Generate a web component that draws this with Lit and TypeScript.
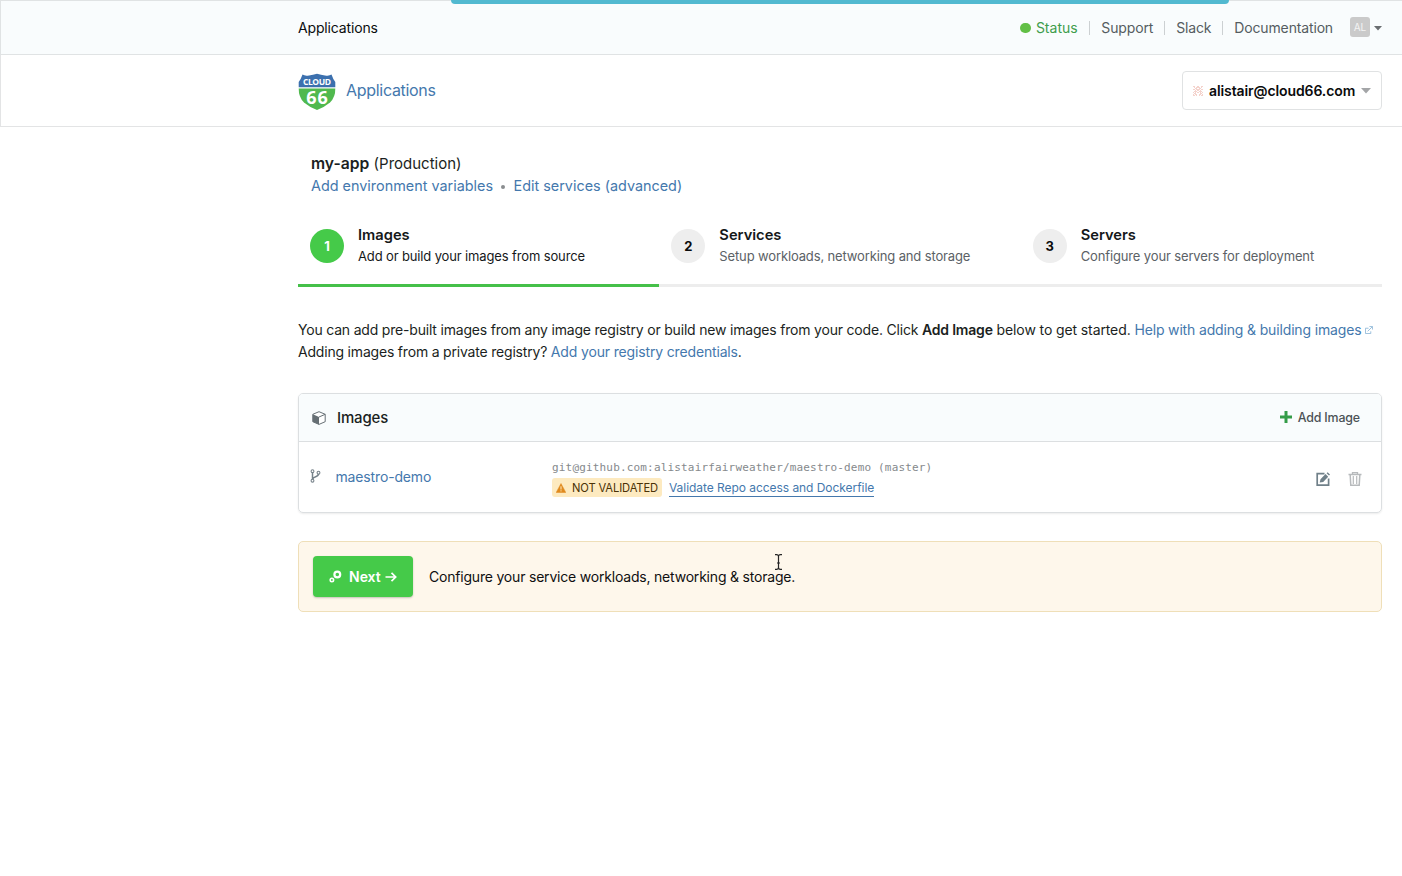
import { LitElement, html, css, svg } from "lit";
import { customElement } from "lit/decorators.js";
import { classMap } from "lit/directives/class-map.js";

interface Step {
  n: number;
  title: string;
  text: string;
  active?: boolean;
}

const STEPS: Step[] = [
  { n: 1, title: "Images", text: "Add or build your images from source", active: true },
  { n: 2, title: "Services", text: "Setup workloads, networking and storage" },
  { n: 3, title: "Servers", text: "Configure your servers for deployment" },
];

const identicon = [
  [0, 0], [1, 0], [4, 0], [5, 0], [8, 0], [9, 0], [1, 1], [3, 1], [4, 1], [5, 1], [6, 1], [8, 1], [2, 2], [3, 2], [6, 2], [7, 2],
  [0, 3], [1, 3], [3, 3], [4, 3], [5, 3], [6, 3], [8, 3], [9, 3], [2, 4], [4, 4], [5, 4], [7, 4], [1, 5], [2, 5], [3, 5], [6, 5], [7, 5], [8, 5],
  [0, 6], [2, 6], [4, 6], [5, 6], [7, 6], [9, 6], [1, 7], [2, 7], [7, 7], [8, 7], [0, 8], [2, 8], [3, 8], [6, 8], [7, 8], [9, 8], [0, 9], [1, 9], [3, 9], [6, 9], [8, 9], [9, 9],
];

@customElement("app-root")
export class AppRoot extends LitElement {
  static styles = css`
    :host {
      display: block;
      position: relative;
      height: 876px;
      overflow: hidden;
      background: #fff;
      color: #1b1f22;
      font-family: Inter, "Noto Sans", sans-serif;
      font-size: 14px;
      line-height: 22px;
      letter-spacing: -0.15px;
    }
    * { box-sizing: border-box; }
    svg { display: block; flex: none; letter-spacing: 0; }
    a { color: #4478ad; text-decoration: none; white-space: nowrap; }
    .loader {
      position: absolute;
      top: 0;
      left: 451px;
      width: 778px;
      height: 4px;
      background: #52b9d0;
      border-radius: 0 0 5px 5px;
    }
    .topbar {
      display: flex;
      align-items: center;
      justify-content: space-between;
      height: 55px;
      padding: 1px 20px 0 297px;
      background: #f9fcfd;
      border: 1px solid #e0e3e4;
      border-right: 0;
    }
    .topbar .current { color: #0b0d0e; }
    .links { display: flex; align-items: center; }
    .links a { color: #555c61; }
    .links a + a { margin-left: 11px; padding-left: 12px; position: relative; }
    .links a + a::before {
      content: "";
      position: absolute;
      left: 0;
      top: 4px;
      height: 14px;
      width: 1px;
      background: #ccd0d2;
    }
    .links a.status { display: flex; align-items: center; gap: 5px; margin-right: 0.7px; color: #3f9d4c; letter-spacing: 0; }
    .dot { width: 10.5px; height: 10.5px; border-radius: 50%; background: #62bf46; }
    .avatar {
      margin: -3px 4px 0 17px;
      width: 20px;
      height: 20px;
      border-radius: 3px;
      background: #cacaca;
      color: #f4f4f4;
      font-size: 10px;
      line-height: 20px;
      text-align: center;
    }
    .brandbar {
      display: flex;
      align-items: center;
      justify-content: space-between;
      height: 72px;
      padding: 0 20px 0 297px;
      border: 1px solid #e3e4e5;
      border-width: 0 0 1px 1px;
    }
    .brand { display: flex; align-items: center; gap: 10px; font-size: 16px; letter-spacing: -0.3px; }
    .brand svg { margin-top: 3px; }
    .brand span { margin-bottom: 2px; }
    .account {
      display: flex;
      align-items: center;
      width: 200px;
      height: 39px;
      padding: 0 10px;
      border: 1px solid #e0e2e3;
      border-radius: 4px;
      color: #0b0b0c;
      font-size: 14px;
      font-weight: 600;
      letter-spacing: -0.1px;
    }
    .account span { flex: 1; margin-left: 6px; }
    main { width: 1084px; margin-left: 298px; padding-top: 26px; }
    .app { padding-left: 13px; font-size: 14.4px; letter-spacing: 0; }
    .app .title { font-size: 15px; letter-spacing: 0; height: 22px; }
    .app strong { font-weight: 600; font-size: 15.7px; }
    .sep {
      display: inline-block;
      width: 4px;
      height: 4px;
      margin: 0 8.5px 0 8px;
      border-radius: 50%;
      background: #8a8d8f;
      vertical-align: 2px;
    }
    .steps { display: grid; grid-template-columns: repeat(3, 1fr); margin-top: 20px; }
    .step {
      display: flex;
      gap: 14px;
      height: 70px;
      padding: 6px 0 0 12px;
      border-bottom: 3px solid #ededed;
      color: #5b6166;
      font-size: 13px;
      letter-spacing: -0.135px;
    }
    .step.active { border-color: #45c049; color: #15181a; }
    .num {
      flex: none;
      width: 34px;
      height: 34px;
      margin-top: 6px;
      border-radius: 50%;
      background: #eee;
      color: #0b0b0c;
      font-weight: 700;
      line-height: 34px;
      text-align: center;
    }
    .active .num { background: #45ca49; color: #fff; }
    .step h3 { margin: 1px 0 -1px; font-size: 14.7px; font-weight: 600; color: #15181a; line-height: 22px; letter-spacing: 0; }
    .intro { margin: 32px 0 0; white-space: nowrap; letter-spacing: -0.195px; }
    .intro a { letter-spacing: -0.155px; }
    .intro .tail { letter-spacing: -0.11px; }
    .intro strong { font-weight: 600; }
    .intro svg { display: inline-block; vertical-align: 1px; }
    .panel {
      margin-top: 30px;
      height: 120px;
      border: 1px solid #dcdfe1;
      border-radius: 5px;
      box-shadow: 0 1px 2px rgba(0, 0, 0, 0.08);
      overflow: hidden;
    }
    .panel header {
      display: flex;
      align-items: center;
      height: 48px;
      padding: 0 21px 0 13px;
      background: #f9fcfd;
      border-bottom: 1px solid #dcdfe1;
      font-size: 15px;
    }
    .panel header .name { margin-left: 11px; flex: 1; font-weight: 500; }
    .add { display: flex; align-items: center; gap: 6px; font-size: 12.4px; font-weight: 500; color: #4b5256; }
    .add svg { margin-top: -2px; }
    .row { display: flex; align-items: center; height: 70px; padding: 0 19px 0 11px; }
    .branch { margin-top: -2px; }
    .row .repo { width: 216.5px; margin: -1px 0 0 14.5px; }
    .detail { flex: 1; margin-top: 3px; }
    .git {
      font-family: "DejaVu Sans Mono", monospace;
      font-size: 11px;
      letter-spacing: 0.17px;
      line-height: 16px;
      color: #85898c;
    }
    .checks { display: flex; align-items: center; gap: 7px; margin-top: 1px; height: 20px; font-size: 12px; letter-spacing: -0.05px; }
    .badge {
      display: flex;
      align-items: center;
      gap: 6px;
      width: 110px;
      height: 19px;
      padding: 1px 4px 0;
      border-radius: 3px;
      background: #fdeac0;
      color: #4a3206;
      font-size: 11.2px;
      letter-spacing: -0.12px;
      white-space: nowrap;
    }
    .checks a { margin-top: 2px; line-height: 17px; border-bottom: 1px solid #4478ad; }
    .actions { display: flex; gap: 18px; margin-top: 4px; }
    .next {
      position: relative;
      display: flex;
      align-items: center;
      gap: 16px;
      height: 71px;
      margin-top: 28px;
      padding: 0 14px;
      border: 1px solid #efdfb8;
      border-radius: 5px;
      background: #fef7eb;
      color: #0f0f10;
      letter-spacing: -0.2px;
    }
    .btn {
      display: flex;
      align-items: center;
      width: 100px;
      height: 41px;
      padding-left: 16px;
      border-radius: 4px;
      background: #45ca49;
      box-shadow: 0 1px 2px rgba(0, 0, 0, 0.22);
      color: #fff;
      font-weight: 600;
      letter-spacing: 0;
    }
    .btn span { margin: 0 4px 0 7px; }
    .cursor { position: absolute; left: 475px; top: 12px; }
  `;

  private logo() {
    return html`<svg width="38" height="38" viewBox="0 0 38 38">
      <path d="M4.500 1.500Q7 3.200 11 2.400Q15 2.200 19 .8Q23 2.200 27 2.400Q31 3.200 33.500 1.500Q35 6 37.300 9V14.200H.7V9Q3 6 4.500 1.500Z" fill="#3c70ae" />
      <path d="M.7 15.500H37.300Q37.500 24 32 29.500Q27 33.800 19 37Q11 33.800 6 29.500Q.500 24 .7 15.500Z" fill="#50b94e" />
      <text x="19" y="11.900" fill="#fff" font-family="Open Sans" font-size="8.500" font-weight="700" text-anchor="middle" textLength="28" lengthAdjust="spacing">CLOUD</text>
      <text x="19" y="31" fill="#fff" font-family="Open Sans" font-size="18" font-weight="700" text-anchor="middle" textLength="21.500" lengthAdjust="spacing">66</text>
    </svg>`;
  }

  render() {
    return html`
      <div class="topbar">
        <span class="current">Applications</span>
        <nav class="links">
          <a class="status"><i class="dot"></i>Status</a>
          <a>Support</a><a>Slack</a><a>Documentation</a>
          <span class="avatar">AL</span>
          <svg width="8" height="5" viewBox="0 0 8 5"><path d="M0 0H8L4 4.500Z" fill="#6a6e71" /></svg>
        </nav>
      </div>
      <div class="loader"></div>
      <div class="brandbar">
        <a class="brand">${this.logo()}<span>Applications</span></a>
        <div class="account">
          <svg width="10" height="10" viewBox="0 0 10 10">
            ${identicon.map(([x, y]) => svg`<rect x=${x} y=${y} width="1" height="1" fill="#f4d3cd" />`)}
          </svg>
          <span>alistair@cloud66.com</span>
          <svg width="10" height="6" viewBox="0 0 10 6"><path d="M0 0H10L5 5.500Z" fill="#a3a5a7" /></svg>
        </div>
      </div>
      <main>
        <div class="app">
          <div class="title"><strong>my-app</strong> (Production)</div>
          <div><a>Add environment variables</a><i class="sep"></i><a>Edit services (advanced)</a></div>
        </div>
        <div class="steps">
          ${STEPS.map((s) => html`<div class=${classMap({ step: true, active: !!s.active })}>
            <span class="num">${s.n}</span>
            <div><h3>${s.title}</h3><div class="text">${s.text}</div></div>
          </div>`)}
        </div>
        <p class="intro">You can add pre-built images from any image registry or build new images from your code. Click <strong>Add Image</strong><span class="tail"> below to get started. </span><a>Help with adding &amp; building images
          <svg width="8" height="8" viewBox="0 0 9 9" fill="none" stroke="#8fb8d8"><path d="M4 2.500H.500V8.500H6.500V6M3 6L8 1M5 .500H8.500V4" /></svg></a><br />Adding images from a private registry? <a>Add your registry credentials</a>.</p>
        <section class="panel">
          <header>
            <svg width="14" height="14" viewBox="0 0 14 14">
              <path d="M.8 3.300L7 .700L13.200 3.300V10.700L7 13.400L.8 10.700Z" fill="#fff" stroke="#666f74" />
              <path d="M.8 3.300L7 6V13.400L.8 10.700Z" fill="#666f74" />
              <path d="M7 6L13.200 3.300" stroke="#666f74" />
            </svg>
            <span class="name">Images</span>
            <span class="add">
              <svg width="12" height="12" viewBox="0 0 12 12"><path d="M4.500 0H7.500V4.500H12V7.500H7.500V12H4.500V7.500H0V4.500H4.500Z" fill="#349c48" /></svg>Add Image
            </span>
          </header>
          <div class="row">
            <svg class="branch" width="11" height="14" viewBox="0 0 11 14" fill="none" stroke="#76828a" stroke-width="1.100">
              <circle cx="2.500" cy="2.200" r="1.400" /><circle cx="2.500" cy="11.700" r="1.400" /><circle cx="8.500" cy="3.700" r="1.400" />
              <path d="M2.500 3.600V10.300M8.500 5.100C8.500 8.500 3.500 7 2.700 10" stroke-width="1.500" />
            </svg>
            <a class="repo">maestro-demo</a>
            <div class="detail">
              <div class="git">git@github.com:alistairfairweather/maestro-demo (master)</div>
              <div class="checks">
                <span class="badge">
                  <svg width="10" height="10" viewBox="0 0 10 10"><path d="M5 .500L9.800 9.500H.2Z" fill="#e08a1e" stroke="#e08a1e" stroke-width=".5" stroke-linejoin="round" /><path d="M5 3.300V6.500M5 7.300V8.400" stroke="#fdeac0" /></svg>
                  NOT VALIDATED</span>
                <a>Validate Repo access and Dockerfile</a>
              </div>
            </div>
            <div class="actions">
              <svg width="14" height="14" viewBox="0 0 14 14">
                <path d="M8.500 1.700H1.200V13.100H12.600V6.500" fill="none" stroke="#708089" stroke-width="1.700" />
                <path d="M3.700 10.500L4.500 7.200L9.500 2L12.200 4.700L7.200 9.900ZM10.600 1.200L11.600 .2L14 2.600L13 3.600Z" fill="#708089" />
              </svg>
              <svg width="14" height="14" viewBox="0 0 14 14" fill="none" stroke="#b7babc">
                <path d="M.5 2.500H13.500M4.500 2V.6H9.500V2" stroke-width="1.300" /><path d="M2.200 3L2.800 13.300H11.200L11.800 3" stroke-width="1.500" /><path d="M5.300 4V12M8.700 4V12" stroke-width="1.200" />
              </svg>
            </div>
          </div>
        </section>
        <div class="next">
          <div class="btn">
            <svg width="13" height="13" viewBox="0 0 13 13" fill="none" stroke="#fff"><circle cx="8.300" cy="4.500" r="2.900" stroke-width="2.200" /><circle cx="2.900" cy="10" r="1.700" stroke-width="1.600" /></svg>
            <span>Next</span>
            <svg width="12" height="12" viewBox="0 0 12 12" fill="none" stroke="#fff" stroke-width="1.700"><path d="M.5 6H10.500M6.500 1.800L10.700 6L6.500 10.200" /></svg>
          </div>
          <div>Configure your service workloads, networking &amp; storage.</div>
          <svg class="cursor" width="9" height="16" viewBox="0 0 9 16" fill="none" stroke="#242424" stroke-width="1.200"><path d="M1 .6H2.500Q4.500 .6 4.500 2.500Q4.500 .6 6.500 .6H8M4.500 2.500V13.500M1 15.400H2.500Q4.500 15.400 4.500 13.500Q4.500 15.400 6.500 15.400H8M3 9H6" /></svg>
        </div>
      </main>
    `;
  }
}
